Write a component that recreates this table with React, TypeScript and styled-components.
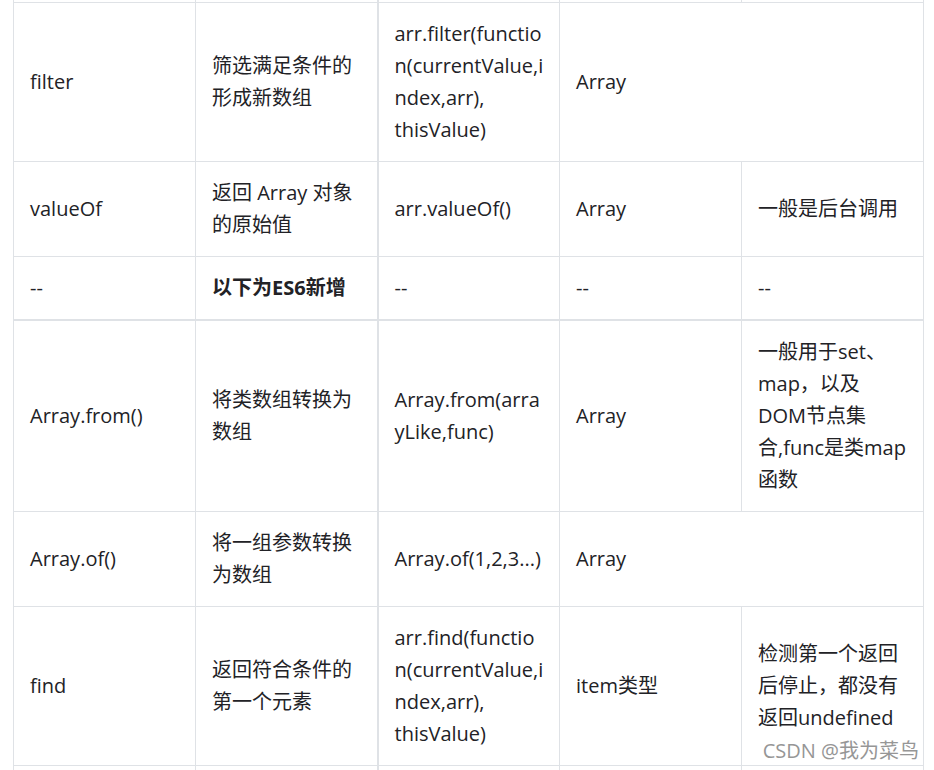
import React from "react";
import styled, { createGlobalStyle } from "styled-components";

const GlobalStyle = createGlobalStyle`
  html, body {
    margin: 0;
    padding: 0;
    background: #ffffff;
  }
  body {
    overflow: hidden;
  }
`;

const Page = styled.div`
  position: relative;
  width: 934px;
  height: 770px;
  overflow: hidden;
  padding-left: 13px;
  box-sizing: border-box;
  background: #ffffff;
  font-family: "Open Sans", "Noto Sans CJK SC", sans-serif;
  color: #222226;
`;

const Table = styled.table`
  width: 911px;
  border-collapse: collapse;
  table-layout: fixed;
`;

const Col = styled.col`
  width: 182px;
`;

const Cell = styled.td<{ $bold?: boolean; $thickTop?: boolean; $thickLeft?: boolean }>`
  border: 1px solid #dfe2e6;
  ${(p) => (p.$thickTop ? "border-top-width: 2px;" : "")}
  ${(p) => (p.$thickLeft ? "border-left-width: 2px;" : "")}
  padding: 15px 16px;
  font-size: 20px;
  line-height: 32px;
  font-weight: ${(p) => (p.$bold ? 700 : 400)};
  vertical-align: middle;
  white-space: nowrap;
  overflow: hidden;
`;

const CutCell = styled.td<{ $thickLeft?: boolean }>`
  border: 1px solid #dfe2e6;
  border-top: none;
  ${(p) => (p.$thickLeft ? "border-left-width: 2px;" : "")}
  padding: 0;
  height: 2px;
  font-size: 0;
  line-height: 0;
`;

const TailCell = styled.td<{ $thickLeft?: boolean }>`
  border: 1px solid #dfe2e6;
  ${(p) => (p.$thickLeft ? "border-left-width: 2px;" : "")}
  padding: 0;
  height: 60px;
`;

const Watermark = styled.div`
  position: absolute;
  right: 15px;
  bottom: 7px;
  font-family: "Open Sans", "Noto Sans CJK SC", sans-serif;
  font-size: 20px;
  line-height: 24px;
  color: #969696;
  text-shadow: 0 0 2px #ffffff, 0 0 2px #ffffff;
  white-space: nowrap;
`;

type Row = {
  cells: { content: React.ReactNode; span?: number; bold?: boolean }[];
  thickTop?: boolean;
};

const lines = (...parts: string[]) =>
  parts.map((p, i) => (
    <React.Fragment key={i}>
      {i > 0 && <br />}
      {p}
    </React.Fragment>
  ));

const rows: Row[] = [
  {
    cells: [
      { content: "filter" },
      { content: lines("筛选满足条件的", "形成新数组") },
      { content: lines("arr.filter(functio", "n(currentValue,i", "ndex,arr),", "thisValue)") },
      { content: "Array", span: 2 },
    ],
  },
  {
    cells: [
      { content: "valueOf" },
      { content: lines("返回 Array 对象", "的原始值") },
      { content: "arr.valueOf()" },
      { content: "Array" },
      { content: "一般是后台调用" },
    ],
  },
  {
    cells: [
      { content: "--" },
      { content: "以下为ES6新增", bold: true },
      { content: "--" },
      { content: "--" },
      { content: "--" },
    ],
  },
  {
    thickTop: true,
    cells: [
      { content: "Array.from()" },
      { content: lines("将类数组转换为", "数组") },
      { content: lines("Array.from(arra", "yLike,func)") },
      { content: "Array" },
      { content: lines("一般用于set、", "map，以及", "DOM节点集", "合,func是类map", "函数") },
    ],
  },
  {
    cells: [
      { content: "Array.of()" },
      { content: lines("将一组参数转换", "为数组") },
      { content: "Array.of(1,2,3...)" },
      { content: "Array", span: 2 },
    ],
  },
  {
    cells: [
      { content: "find" },
      { content: lines("返回符合条件的", "第一个元素") },
      { content: lines("arr.find(functio", "n(currentValue,i", "ndex,arr),", "thisValue)") },
      { content: "item类型" },
      { content: lines("检测第一个返回", "后停止，都没有", "返回undefined") },
    ],
  },
];

export default function App() {
  return (
    <>
      <GlobalStyle />
      <Page>
        <Table>
          <colgroup>
            <Col />
            <Col />
            <Col />
            <Col />
            <Col />
          </colgroup>
          <tbody>
            <tr>
              {[0, 1, 2, 3, 4].map((i) => (
                <CutCell key={i} $thickLeft={i === 2} />
              ))}
            </tr>
            {rows.map((row, r) => (
              <tr key={r}>
                {row.cells.map((c, i) => (
                  <Cell
                    key={i}
                    colSpan={c.span}
                    $bold={c.bold}
                    $thickTop={row.thickTop}
                    $thickLeft={i === 2}
                  >
                    {c.content}
                  </Cell>
                ))}
              </tr>
            ))}
            <tr>
              {[0, 1, 2, 3, 4].map((i) => (
                <TailCell key={i} $thickLeft={i === 2} />
              ))}
            </tr>
          </tbody>
        </Table>
        <Watermark>CSDN @我为菜鸟</Watermark>
      </Page>
    </>
  );
}
